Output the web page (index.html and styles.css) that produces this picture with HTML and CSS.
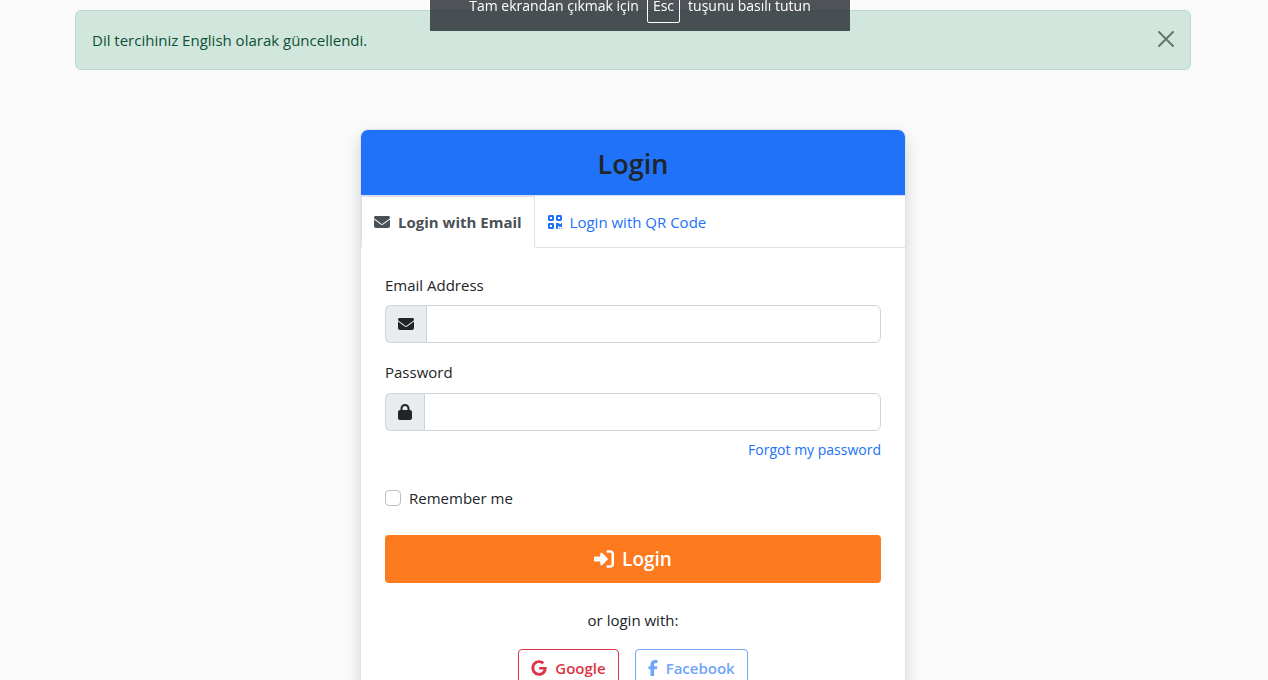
FILE: index.html
```html
<!DOCTYPE html>
<html lang="en">
<head>
<meta charset="utf-8">
<meta name="viewport" content="width=device-width, initial-scale=1">
<title>Login</title>
<link rel="stylesheet" href="styles.css">
</head>
<body>
<svg class="sprite" aria-hidden="true">
  <symbol id="envelope" viewBox="0 0 512 512"><path d="M48 64C21.500 64 0 85.500 0 112c0 15.100 7.100 29.300 19.200 38.400L236.800 313.600c11.400 8.500 27 8.500 38.400 0L492.800 150.400c12.100-9.100 19.200-23.300 19.200-38.400 0-26.500-21.500-48-48-48H48zM0 176V384c0 35.300 28.700 64 64 64H448c35.300 0 64-28.700 64-64V176L294.400 339.200c-22.800 17.100-54 17.100-76.800 0L0 176z"/></symbol>
  <symbol id="qrcode" viewBox="0 0 448 512"><path d="M0 80C0 53.500 21.500 32 48 32h96c26.500 0 48 21.500 48 48v96c0 26.500-21.500 48-48 48H48c-26.500 0-48-21.500-48-48V80zM64 96v64h64V96H64zM0 336c0-26.500 21.500-48 48-48h96c26.500 0 48 21.500 48 48v96c0 26.500-21.500 48-48 48H48c-26.500 0-48-21.500-48-48V336zm64 16v64h64V352H64zM304 32h96c26.500 0 48 21.500 48 48v96c0 26.500-21.500 48-48 48H304c-26.500 0-48-21.500-48-48V80c0-26.500 21.500-48 48-48zm80 64H320v64h64V96zM256 304c0-8.800 7.200-16 16-16h64c8.800 0 16 7.200 16 16s7.200 16 16 16h32c8.800 0 16-7.200 16-16s7.200-16 16-16 16 7.200 16 16v96c0 8.800-7.200 16-16 16H368c-8.800 0-16-7.200-16-16s-7.200-16-16-16-16 7.200-16 16v64c0 8.800-7.200 16-16 16H272c-8.800 0-16-7.200-16-16V304zM368 480a16 16 0 1 1 0-32 16 16 0 1 1 0 32zm64 0a16 16 0 1 1 0-32 16 16 0 1 1 0 32z"/></symbol>
  <symbol id="lock" viewBox="0 0 448 512"><path d="M144 144v48H304V144c0-44.200-35.800-80-80-80s-80 35.800-80 80zM80 192V144C80 64.500 144.500 0 224 0s144 64.500 144 144v48h16c35.300 0 64 28.700 64 64V448c0 35.300-28.700 64-64 64H64c-35.300 0-64-28.700-64-64V256c0-35.300 28.700-64 64-64H80z"/></symbol>
  <symbol id="signin" viewBox="0 0 512 512"><path d="M217.900 105.900L340.700 228.700c7.200 7.200 11.300 17.100 11.300 27.300s-4.100 20.100-11.300 27.300L217.900 406.100c-6.400 6.400-15 9.900-24 9.900-18.700 0-33.900-15.200-33.900-33.900V320H32c-17.700 0-32-14.300-32-32V224c0-17.700 14.300-32 32-32H160V129.900c0-18.700 15.200-33.900 33.900-33.900 9 0 17.600 3.600 24 9.900zM352 416h64c17.700 0 32-14.300 32-32V128c0-17.700-14.300-32-32-32H352c-17.700 0-32-14.300-32-32s14.300-32 32-32h64c53 0 96 43 96 96V384c0 53-43 96-96 96H352c-17.700 0-32-14.300-32-32s14.300-32 32-32z"/></symbol>
  <symbol id="google" viewBox="0 0 488 512"><path d="M488 261.800C488 403.300 391.100 504 248 504 110.800 504 0 393.200 0 256S110.800 8 248 8c66.800 0 123 24.500 166.300 64.900l-67.500 64.900C258.500 52.600 94.300 116.600 94.300 256c0 86.500 69.100 156.600 153.700 156.600 98.200 0 135-70.400 140.800-106.900H248v-85.300h236.100c2.300 12.700 3.900 24.900 3.900 41.400z"/></symbol>
  <symbol id="facebook" viewBox="0 0 320 512"><path d="M80 299.300V512H196V299.300h86.500l18-97.800H196V166.900c0-51.700 20.300-71.500 72.700-71.500 16.300 0 29.400 .4 37 1.200V7.900C291.400 4 256.400 0 236.200 0 129.300 0 80 50.500 80 159.400v42.100H14v97.800H80z"/></symbol>
</svg>

<div class="fullscreen-hint" role="status">
  <span>Tam ekrandan çıkmak için</span><kbd class="key">Esc</kbd><span>tuşunu basılı tutun</span>
</div>

<main class="page">
  <div class="alert" role="alert">
    <span>Dil tercihiniz English olarak güncellendi.</span>
    <button class="alert-close" type="button" aria-label="Close">
      <svg width="16" height="16" viewBox="0 0 16 16" fill="none" stroke="currentColor" stroke-width="2" stroke-linecap="round"><path d="M1 1l14 14M15 1L1 15"/></svg>
    </button>
  </div>

  <section class="card">
    <header class="card-header"><h1 class="card-title">Login</h1></header>
    <nav class="tabs">
      <a class="tab tab-active" href="#email-login"><svg class="icon" width="16" height="16"><use href="#envelope"/></svg>Login with Email</a>
      <a class="tab" href="#qr-login"><svg class="icon" width="14" height="16"><use href="#qrcode"/></svg>Login with QR Code</a>
    </nav>
    <form class="card-body" id="email-login">
      <div class="field">
        <label for="email">Email Address</label>
        <div class="input-group">
          <span class="addon"><svg class="icon" width="16" height="16"><use href="#envelope"/></svg></span>
          <input class="input" id="email" type="email">
        </div>
      </div>
      <div class="field">
        <label for="password">Password</label>
        <div class="input-group">
          <span class="addon"><svg class="icon" width="14" height="16"><use href="#lock"/></svg></span>
          <input class="input" id="password" type="password">
        </div>
        <a class="forgot" href="#forgot">Forgot my password</a>
      </div>
      <div class="remember">
        <input class="checkbox" id="remember" type="checkbox">
        <label for="remember">Remember me</label>
      </div>
      <button class="submit" type="submit"><svg class="icon" width="20" height="20"><use href="#signin"/></svg>Login</button>
      <p class="alternative">or login with:</p>
      <div class="social">
        <a class="social-button google" href="#google-login"><svg class="icon" width="16" height="16"><use href="#google"/></svg>Google</a>
        <a class="social-button facebook" href="#facebook-login"><svg class="icon" width="10" height="16"><use href="#facebook"/></svg>Facebook</a>
      </div>
    </form>
  </section>
</main>
</body>
</html>
```
FILE: styles.css
```css
*, *::before, *::after { box-sizing: border-box; }

body {
  margin: 0;
  padding: 10px 14px 0 12px;
  height: 100vh;
  overflow: hidden;
  background: #fafafa;
  color: #212529;
  font: 15px/24px "Segoe UI", "Open Sans", "Noto Sans", sans-serif;
}

.sprite { position: absolute; width: 0; height: 0; }
.icon { flex: none; fill: currentColor; }
a { color: #2072f8; text-decoration: none; }

.page { max-width: 1116px; margin: 0 auto; }

.fullscreen-hint {
  position: fixed;
  top: -19px;
  left: 50%;
  z-index: 10;
  display: flex;
  align-items: center;
  justify-content: center;
  gap: 8px;
  width: 420px;
  height: 50px;
  margin-left: -204px;
  background: rgba(40, 43, 49, 0.81);
  color: #fff;
  font-size: 14px;
  white-space: nowrap;
}
.key {
  padding: 4px 5px;
  border: 1px solid #fff;
  border-radius: 2px;
  font: inherit;
}

.alert {
  display: flex;
  align-items: center;
  justify-content: space-between;
  min-height: 60px;
  padding: 0 16px;
  border: 1px solid #badbcc;
  border-radius: 6px;
  background: #d1e7dd;
  color: #0f5132;
}
.alert-close {
  display: flex;
  padding: 0 0 2px;
  border: 0;
  background: none;
  color: #66766d;
}

.card {
  max-width: 546px;
  margin: 59px auto 0;
  border: 1px solid #dee2e6;
  border-radius: 8px;
  background: #fff;
  box-shadow: 0 8px 16px rgba(0, 0, 0, 0.15);
}
.card-header {
  padding: 17px 16px 15px;
  border-bottom: 1px solid #d5dff0;
  border-radius: 7px 7px 0 0;
  background: #2072f8;
  text-align: center;
}
.card-title { margin: 0; font-size: 27px; font-weight: 600; line-height: 33px; }

.tabs { display: flex; border-bottom: 1px solid #dee2e6; }
.tab {
  display: flex;
  align-items: center;
  gap: 8px;
  height: 52px;
  margin-bottom: -1px;
  padding: 0 12px;
  border: 1px solid transparent;
}
.tab-active {
  border-color: #dee2e6 #dee2e6 #fff;
  background: #fff;
  color: #495057;
  font-weight: 700;
}

.card-body { padding: 25px 24px; }
.field { display: grid; margin-bottom: 17px; }
.field label { margin-bottom: 8px; }
.field + .field label { margin-bottom: 9px; }
.input-group { display: flex; height: 38px; }
.addon {
  display: flex;
  align-items: center;
  padding: 0 12px;
  border: 1px solid #ced4da;
  border-right: 0;
  border-radius: 6px 0 0 6px;
  background: #e9ecef;
}
.input {
  flex: 1;
  min-width: 0;
  padding: 6px 12px;
  border: 1px solid #ced4da;
  border-radius: 0 6px 6px 0;
  background: #fff;
  font: inherit;
}
.forgot { justify-self: end; margin-top: 7px; font-size: 14px; }

.remember { display: flex; align-items: center; gap: 8px; margin: 24px 0 25px; }
.checkbox {
  appearance: none;
  width: 16px;
  height: 16px;
  margin: 0;
  border: 1px solid #bfbfbf;
  border-radius: 4px;
  background: #fff;
}

.submit {
  display: flex;
  align-items: center;
  justify-content: center;
  gap: 8px;
  width: 100%;
  height: 48px;
  border: 0;
  border-radius: 4px;
  background: #fd7a1e;
  color: #fff;
  font: 600 19px/28px "Segoe UI", "Open Sans", "Noto Sans", sans-serif;
}
.alternative { margin: 25px 0 17px; text-align: center; }
.social { display: flex; justify-content: center; gap: 16px; }
.social-button {
  display: flex;
  align-items: center;
  gap: 8px;
  height: 38px;
  padding: 0 12px;
  border: 1px solid currentColor;
  border-radius: 4px;
  font-weight: 600;
}
.google { color: #dc3545; }
.facebook { color: #70a5fa; }
```
